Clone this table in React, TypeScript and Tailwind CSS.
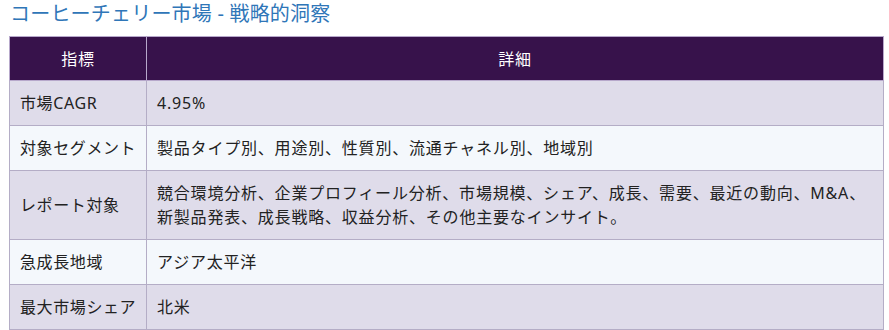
const rows: [string, string[]][] = [
  ['市場CAGR', ['4.95%']],
  ['対象セグメント', ['製品タイプ別、用途別、性質別、流通チャネル別、地域別']],
  [
    'レポート対象',
    [
      '競合環境分析、企業プロフィール分析、市場規模、シェア、成長、需要、最近の動向、M&A、',
      '新製品発表、成長戦略、収益分析、その他主要なインサイト。',
    ],
  ],
  ['急成長地域', ['アジア太平洋']],
  ['最大市場シェア', ['北米']],
];

export default function App() {
  return (
    <div
      className="w-[889px] h-[330px] bg-white text-[#222222]"
      style={{ fontFamily: '"Noto Sans", "Noto Sans CJK JP", sans-serif' }}
    >
      <h2 className="pl-[10px] pt-[1px] h-[36px] text-[20px] leading-[26px] text-[#2f76b8] font-normal tracking-[0.2px]">
        コーヒーチェリー市場 - 戦略的洞察
      </h2>
      <table className="ml-[9px] w-[875px] table-fixed border-collapse text-[16px] leading-[24px] tracking-[0.8px]">
        <thead>
          <tr className="bg-[#37124b] text-white">
            <th className="w-[137px] h-[44px] border border-[#b7a8cb] font-normal text-center">指標</th>
            <th className="border border-[#b7a8cb] font-normal text-center">詳細</th>
          </tr>
        </thead>
        <tbody>
          {rows.map(([label, lines], i) => (
            <tr key={label} className={i % 2 === 0 ? 'bg-[#dfdcea]' : 'bg-[#f4f8fc]'}>
              <td className="h-[44px] border border-[#b4adc6] pl-[10px] pr-0 py-[10px] whitespace-nowrap tracking-[0.6px]">
                {label}
              </td>
              <td className="border border-[#b4adc6] px-[10px] py-[10px] whitespace-nowrap">
                {lines.map((l) => (
                  <div key={l}>{l}</div>
                ))}
              </td>
            </tr>
          ))}
        </tbody>
      </table>
    </div>
  );
}
